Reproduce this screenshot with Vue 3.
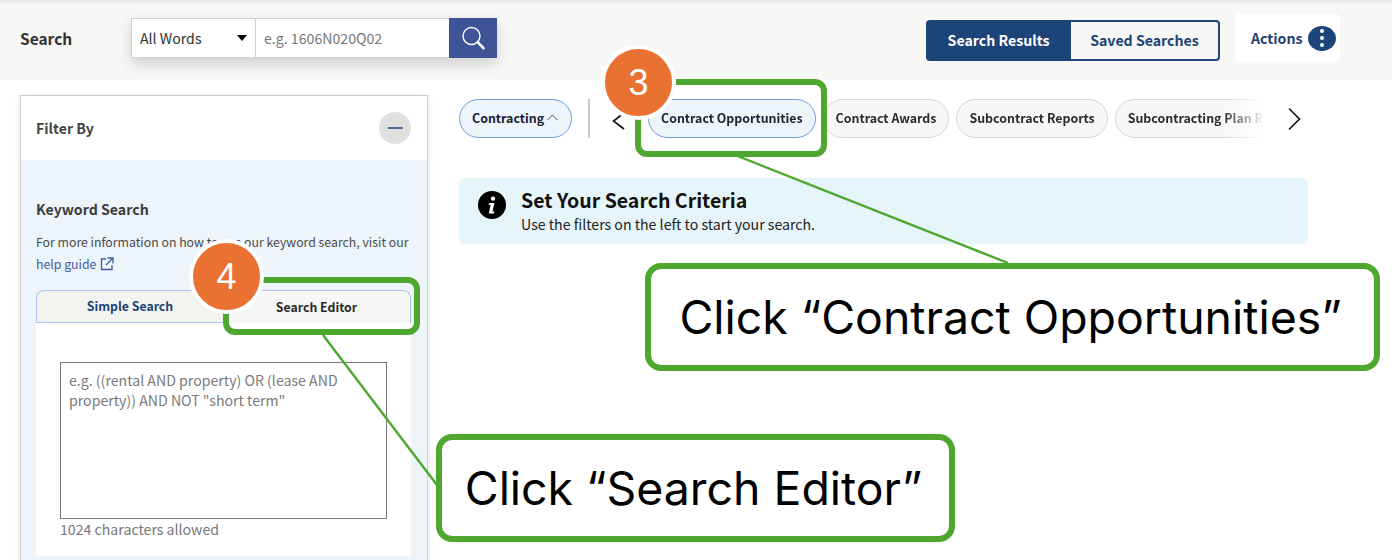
<template>
  <div class="page">
    <header class="topbar">
      <span class="search-label">Search</span>
      <div class="search-group">
        <div class="select">
          <span>All Words</span>
          <span class="caret"></span>
        </div>
        <div class="input">e.g. 1606N020Q02</div>
        <button class="search-btn" aria-label="Search">
          <svg width="26" height="26" viewBox="0 0 26 26" fill="none" stroke="#fff">
            <circle cx="11.5" cy="11" r="8.5" stroke-width="1.4" />
            <path d="M17.6 17.2 L23.5 23.2" stroke-width="2.6" stroke-linecap="round" />
          </svg>
        </button>
      </div>
      <div class="spacer"></div>
      <div class="toggle">
        <div class="toggle-on">Search Results</div>
        <div class="toggle-off">Saved Searches</div>
      </div>
      <div class="actions">
        <span>Actions</span>
        <span class="dots"><i></i><i></i><i></i></span>
      </div>
    </header>

    <div class="content">
      <aside class="filters">
        <div class="filters-head">
          <span>Filter By</span>
          <span class="collapse"><i></i></span>
        </div>
        <div class="filters-body">
          <h3>Keyword Search</h3>
          <p class="help">
            For more information on how to use our keyword search, visit our<br />
            <a>help guide
              <svg width="14" height="14" viewBox="0 0 14 14" fill="none" stroke="#3f5ba0" stroke-width="1.3">
                <path d="M6 2 H1.5 V12.5 H12 V8" />
                <path d="M7.5 1 H13 V6.5 M13 1 L6 8" />
              </svg>
            </a>
          </p>
          <div class="tabs">
            <div class="tab tab-simple">Simple Search</div>
            <div class="tab tab-editor">Search Editor</div>
          </div>
          <div class="tab-panel">
            <div class="textarea">e.g. ((rental AND property) OR (lease AND property)) AND NOT "short term"</div>
            <div class="limit">1024 characters allowed</div>
          </div>
        </div>
      </aside>

      <main class="results">
        <div class="pill-row">
          <div class="pill pill-active pill-menu">
            Contracting
            <svg width="11" height="7" viewBox="0 0 11 7" fill="none" stroke="#555" stroke-width="1">
              <path d="M0.7 6 L5.5 1 L10.3 6" />
            </svg>
          </div>
          <div class="divider"></div>
          <svg class="chev-left" width="14" height="18" viewBox="0 0 14 18" fill="none" stroke="#111" stroke-width="1.6">
            <path d="M13 1 L2.5 9 L13 17" />
          </svg>
          <div class="pill-scroll">
            <div class="pill pill-active">Contract Opportunities</div>
            <div class="pill">Contract Awards</div>
            <div class="pill">Subcontract Reports</div>
            <div class="pill">Subcontracting Plan Reports</div>
          </div>
          <svg class="chev-right" width="14" height="24" viewBox="0 0 14 24" fill="none" stroke="#111" stroke-width="1.6">
            <path d="M2 1.5 L12.5 12 L2 22.5" />
          </svg>
        </div>

        <div class="alert">
          <svg class="alert-icon" width="28" height="28" viewBox="0 0 28 28">
            <circle cx="14" cy="14" r="14" fill="#000" />
            <circle cx="15" cy="7.6" r="2.2" fill="#fff" />
            <path d="M11 12 H16.4 L14.5 20.6 H16.4 L16 22.4 H10.8 L12.6 13.8 H10.7 Z" fill="#fff" />
          </svg>
          <div>
            <div class="alert-title">Set Your Search Criteria</div>
            <div class="alert-text">Use the filters on the left to start your search.</div>
          </div>
        </div>
      </main>
    </div>

    <!-- tutorial annotations drawn on top of the page -->
    <svg class="leaders" width="1392" height="560" fill="none" stroke="#4ea72e" stroke-width="2.4">
      <path d="M735 155 L1008 263" />
      <path d="M323 335 L437 485" />
    </svg>
    <div v-for="box in boxes" :key="box.n" class="hilite" :class="`hilite-${box.n}`"></div>
    <div v-for="box in boxes" :key="box.n" class="badge" :class="`badge-${box.n}`">{{ box.n }}</div>
    <div class="callout callout-3">Click “Contract Opportunities”</div>
    <div class="callout callout-4">Click “Search Editor”</div>
  </div>
</template>

<script setup>
const boxes = [{ n: 3 }, { n: 4 }]
</script>

<style>
html, body { margin: 0; overflow: hidden; background: #fff; }
</style>

<style scoped>
.page {
  position: relative;
  width: 1392px;
  height: 560px;
  overflow: hidden;
  background: #fff;
  font-family: "Noto Sans CJK SC", "Noto Sans", sans-serif;
  color: #1b1b1b;
}

/* top bar */
.topbar {
  display: flex;
  align-items: center;
  height: 80px;
  box-sizing: border-box;
  padding: 0 52px 4px 20px;
  background: #f7f7f5;
  box-shadow: inset 0 4px 3px -2px #e4e4e4;
}
.search-label { width: 111px; font-size: 15.5px; font-weight: 600; color: #333; line-height: 20px; }
.search-group {
  display: flex;
  height: 40px;
  box-shadow: 0 6px 14px rgba(0, 0, 0, 0.16);
  font-size: 14.15px;
  line-height: 20px;
}
.select {
  width: 124px;
  box-sizing: border-box;
  display: flex;
  align-items: center;
  justify-content: space-between;
  padding: 0 8px;
  background: #fff;
  border: 1px solid #d0d0d0;
  border-right: 0;
  color: #333;
}
.caret { border: 5px solid transparent; border-top: 6px solid #000; border-bottom: 0; margin-right: 0; }
.input {
  width: 194px;
  box-sizing: border-box;
  display: flex;
  align-items: center;
  padding-left: 8px;
  background: #fff;
  border: 1px solid #d0d0d0;
  border-right: 0;
  color: #777;
}
.search-btn {
  width: 48px;
  padding: 0;
  border: 0;
  background: #3f5397;
  display: flex;
  align-items: center;
  justify-content: center;
}
.spacer { flex: 1; }
.toggle {
  display: flex;
  width: 294px;
  height: 41px;
  box-sizing: border-box;
  border: 2px solid #1d4478;
  border-radius: 4px;
  font-size: 14.15px;
  font-weight: 600;
  line-height: 20px;
  margin: 5px 15px 0 0;
}
.toggle-on, .toggle-off { display: flex; align-items: center; justify-content: center; padding-bottom: 2px; }
.toggle-on { width: 143px; padding-right: 2px; box-sizing: border-box; background: #1d4478; color: #fff; }
.toggle-off { flex: 1; color: #1d4478; }
.actions {
  width: 105px;
  height: 48px;
  box-sizing: border-box;
  padding: 0 4px 0 16px;
  display: flex;
  align-items: center;
  justify-content: space-between;
  background: #fff;
  border-radius: 4px;
  font-size: 14.15px;
  font-weight: 600;
  line-height: 20px;
  color: #24406f;
}
.dots {
  width: 28px;
  height: 25px;
  border-radius: 50%;
  background: #1d4478;
  display: flex;
  flex-direction: column;
  align-items: center;
  justify-content: center;
  gap: 3px;
}
.dots i { width: 4px; height: 4px; border-radius: 50%; background: #fff; }

/* layout under the bar */
.content { display: flex; align-items: flex-start; padding: 15px 0 0 20px; }

/* filter panel */
.filters {
  width: 408px;
  height: 480px;
  flex: none;
  box-sizing: border-box;
  border: 1px solid #cfcfcf;
  border-bottom: 0;
  box-shadow: 0 2px 6px rgba(0, 0, 0, 0.12);
  display: flex;
  flex-direction: column;
}
.filters-head {
  height: 64px;
  flex: none;
  display: flex;
  align-items: center;
  justify-content: space-between;
  padding: 0 16px 0 15px;
  box-sizing: border-box;
  font-size: 14.15px;
  font-weight: 600;
  line-height: 20px;
  color: #444;
}
.collapse {
  width: 32px;
  height: 32px;
  border-radius: 50%;
  background: #e0e0e0;
  display: flex;
  align-items: center;
  justify-content: center;
}
.collapse i { width: 15px; height: 2px; background: #4f6c9c; }
.filters-body { flex: 1; background: #edf5fb; padding: 39px 16px 0 15px; min-height: 0; }
.filters-body h3 { margin: 0; font-size: 14.15px; font-weight: 600; line-height: 20px; color: #3d3d3d; }
.help { margin: 12px 0 0; font-size: 12.3px; line-height: 22px; color: #4a4a4a; white-space: nowrap; }
.help a { color: #3f5ba0; }
.help svg { vertical-align: -2px; margin-left: 1px; }
.tabs { display: flex; margin-top: 15px; height: 33px; font-size: 12.3px; font-weight: 600; line-height: 20px; }
.tab { display: flex; align-items: center; justify-content: center; box-sizing: border-box; }
.tab-simple {
  width: 187px;
  padding-bottom: 2px;
  background: #f3f4f0;
  color: #1d4478;
  border-top: 1px solid #a9c6f0;
  border-left: 1px solid #a9c6f0;
  border-bottom: 1px solid #a9c6f0;
  border-top-left-radius: 8px;
}
.tab-editor {
  flex: 1;
  background: #f7f7f5;
  color: #2a2a2a;
  border-top: 1px solid #a9c6f0;
  border-right: 1px solid #a9c6f0;
  border-top-right-radius: 8px;
}
.tab-panel { height: 233px; background: #fff; padding: 39px 24px 0; box-sizing: border-box; }
.textarea {
  height: 157px;
  box-sizing: border-box;
  border: 1px solid #777;
  padding: 7px 8px 0;
  font-size: 14.15px;
  line-height: 20px;
  color: #7a7a7a;
}
.limit { font-size: 14.15px; line-height: 20px; color: #777; }

/* right column */
.results { flex: 1; padding: 4px 84px 0 31px; min-width: 0; }
.pill-row { display: flex; align-items: center; height: 39px; }
.pill {
  height: 39px;
  flex: none;
  box-sizing: border-box;
  display: flex;
  align-items: center;
  padding: 0 12px 2px;
  border: 1px solid #d6d6d6;
  border-radius: 20px;
  background: #f7f7f5;
  font-size: 12.4px;
  font-weight: 600;
  line-height: 20px;
  color: #2b2b2b;
}
.pill-menu { width: 113px; gap: 3px; }
.pill-active { background: #edf5fb; border-color: #6f9fe0; color: #1a2233; }
.divider { width: 2px; height: 39px; background: #ccc; margin: 0 0 0 16px; }
.chev-left { margin: 4px 0 0 21px; }
.pill-scroll {
  width: 617px;
  margin-left: 23px;
  display: flex;
  gap: 7px;
  overflow: hidden;
  -webkit-mask-image: linear-gradient(to right, #000 93%, transparent 100%);
  mask-image: linear-gradient(to right, #000 93%, transparent 100%);
}
.chev-right { margin-left: 22px; }
.alert {
  margin-top: 40px;
  height: 66px;
  box-sizing: border-box;
  display: flex;
  align-items: flex-start;
  gap: 15px;
  padding: 12px 0 0 19px;
  border-radius: 6px;
  background: #e6f5f9;
}
.alert-icon { margin-top: 1px; }
.alert-title { font-size: 19.5px; font-weight: 700; line-height: 20px; color: #111; }
.alert-text { margin-top: 4px; font-size: 14.15px; line-height: 20px; color: #222; }

/* annotations */
.leaders { position: absolute; left: 0; top: 0; pointer-events: none; }
.hilite { position: absolute; box-sizing: border-box; border: 6px solid #4ea72e; border-radius: 12px; }
.hilite-3 { left: 635px; top: 79px; width: 192px; height: 78px; }
.hilite-4 { left: 223px; top: 277px; width: 197px; height: 58px; }
.badge {
  position: absolute;
  width: 67px;
  height: 67px;
  box-sizing: content-box;
  border: 4px solid #fff;
  border-radius: 50%;
  background: #e97132;
  color: #fff;
  font-family: "Liberation Sans", sans-serif;
  font-size: 36px;
  line-height: 67px;
  text-align: center;
}
.badge-3 { left: 601px; top: 45px; }
.badge-4 { left: 189px; top: 239px; }
.callout {
  position: absolute;
  box-sizing: border-box;
  display: flex;
  align-items: center;
  justify-content: center;
  height: 108px;
  padding-right: 4px;
  background: #fff;
  border: 6px solid #4ea72e;
  border-radius: 16px;
  font-family: Inter, "Liberation Sans", sans-serif;
  font-size: 46.4px;
  line-height: 56px;
  color: #000;
  white-space: nowrap;
}
.callout-3 { left: 645px; top: 263px; width: 735px; }
.callout-4 { left: 436px; top: 434px; width: 519px; }
</style>
